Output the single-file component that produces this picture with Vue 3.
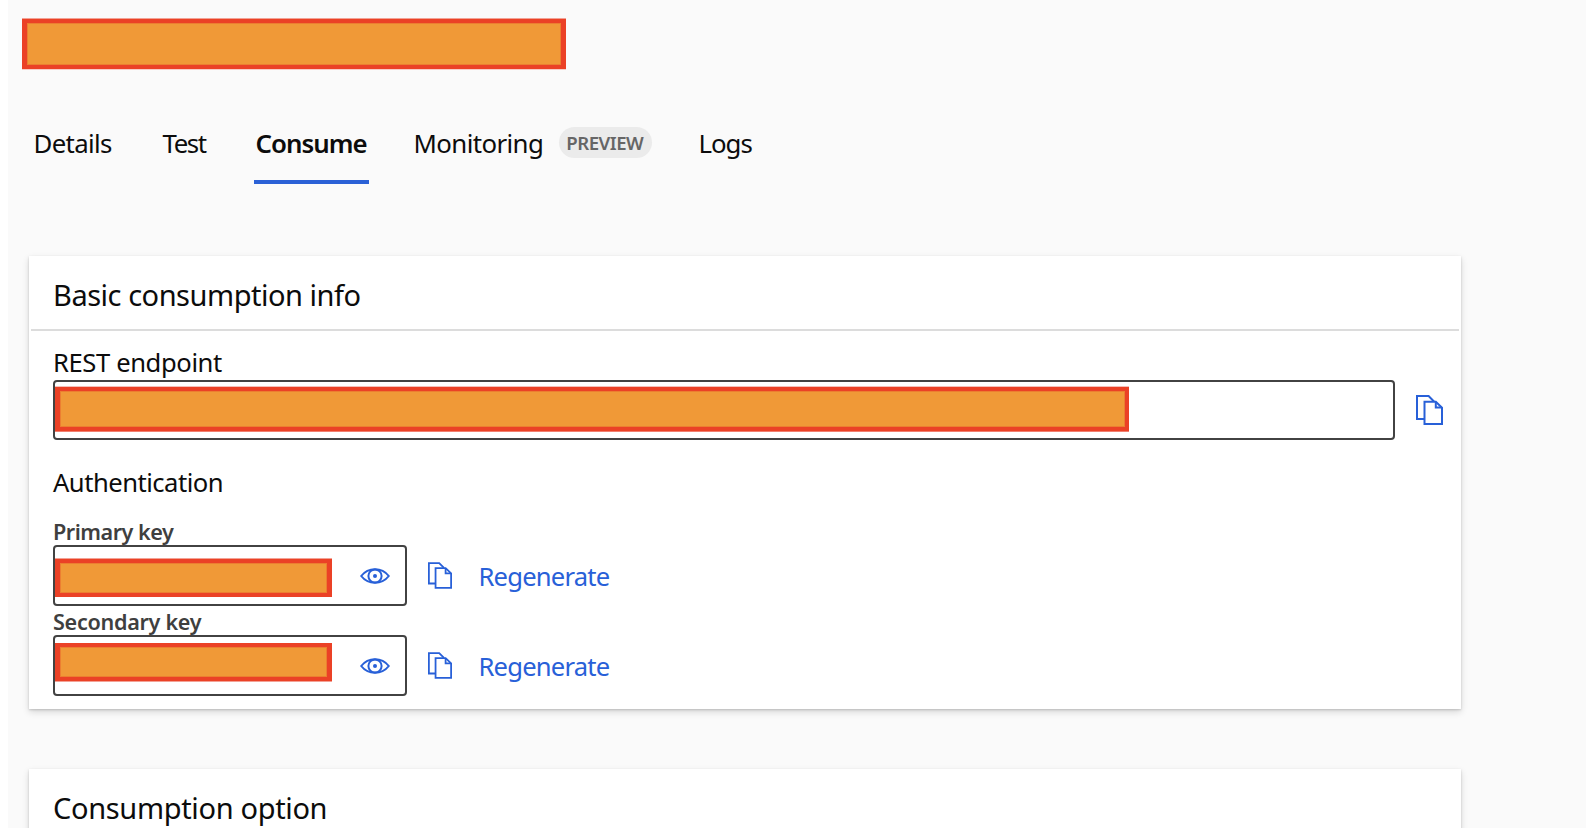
<script setup>
const keys = [
  { label: 'Primary key', cls: 'primary' },
  { label: 'Secondary key', cls: 'secondary' },
]
</script>

<template>
  <div class="window">
    <main class="page">
      <div class="mask mask-title"></div>

      <nav class="tabs">
        <a class="tab details">Details</a>
        <a class="tab test">Test</a>
        <a class="tab active">Consume</a>
        <a class="tab monitoring">Monitoring <span class="pill">PREVIEW</span></a>
        <a class="tab logs">Logs</a>
      </nav>

      <section class="card">
        <h2 class="card-title basic">Basic consumption info</h2>
        <div class="card-body">
          <label class="heading rest">REST endpoint</label>
          <div class="row">
            <div class="field endpoint"><div class="mask mask-endpoint"></div></div>
            <svg class="copy large" viewBox="0 0 27 30">
              <path d="M8 24H1V1H12.6L18 6.500" />
              <path d="M8.500 6.800H19.800L26 12.700V29H8.500Z" />
              <path d="M19.800 6.800V12.500H26" />
            </svg>
          </div>

          <h3 class="heading auth">Authentication</h3>
          <div v-for="k in keys" :key="k.label" class="key" :class="k.cls">
            <label class="key-label">{{ k.label }}</label>
            <div class="row">
              <div class="field secret">
                <div class="mask mask-key"></div>
                <svg class="eye" viewBox="0 0 30 16">
                  <path d="M1.200 8C4.800 3.400 9.600 1.200 15 1.200S25.200 3.400 28.800 8C25.200 12.600 20.400 14.800 15 14.800S4.800 12.600 1.200 8Z" />
                  <circle cx="15" cy="8" r="6.600" />
                  <circle class="pupil" cx="15" cy="8" r="2" />
                </svg>
              </div>
              <svg class="copy small" viewBox="0 0 27 30">
                <path d="M8 24H1V1H12.6L18 6.500" />
                <path d="M8.500 6.800H19.800L26 12.700V29H8.500Z" />
                <path d="M19.800 6.800V12.500H26" />
              </svg>
              <a class="regenerate">Regenerate</a>
            </div>
          </div>
        </div>
      </section>

      <section class="card next">
        <h2 class="card-title option">Consumption option</h2>
      </section>
    </main>
  </div>
</template>

<style>
body { margin: 0; background: #fff; overflow: hidden; }
</style>

<style scoped>
.window {
  box-sizing: border-box;
  width: 1592px;
  height: 828px;
  padding: 0 6px 0 8px;
  overflow: hidden;
  background: #fff;
  font-family: "Noto Sans", "Open Sans", sans-serif;
  color: #0c0c0c;
}
.window * { box-sizing: border-box; }
.page {
  display: flow-root;
  height: 828px;
  overflow: hidden;
  background: #fafafa;
}
.mask {
  background: #f09937;
  border: 4px solid #eb4126;
  border-left-width: 5px;
}
.mask-title {
  width: 544px;
  height: 50px;
  margin: 19px 0 0 14px;
  border-right-width: 5px;
  box-shadow: 0 -1px #f3a195, 0 1px #f8cdc7, inset 0 0 0 1px #ec7e31;
}

.tabs {
  display: grid;
  grid-template-columns: 129px 91.5px 159px 285.5px auto;
  height: 61px;
  margin: 54px 0 0 25.5px;
}
.tab {
  display: flex;
  height: 61px;
  font-size: 25.8px;
  line-height: 40px;
  white-space: nowrap;
}
.details { letter-spacing: -0.68px; }
.test { letter-spacing: -1.4px; }
.monitoring { padding-left: 0.5px; letter-spacing: -0.6px; }
.logs { letter-spacing: -1px; }
.active {
  width: 115px;
  padding-left: 1.5px;
  border-bottom: 4px solid #2b61d6;
  font-weight: 600;
  letter-spacing: -0.95px;
}
.pill {
  width: 93px;
  height: 31px;
  margin: 4px 0 0 16px;
  padding-left: 7.2px;
  border-radius: 15.5px;
  background: #ebebeb;
  color: #666;
  font-size: 18.6px;
  font-weight: 600;
  line-height: 31px;
  letter-spacing: -0.5px;
}

.card {
  width: 1432px;
  height: 453px;
  margin: 72px 0 0 21px;
  background: #fff;
  box-shadow: 0 3px 7px rgba(0, 0, 0, 0.14), 0 1px 2px rgba(0, 0, 0, 0.16);
}
.card.next { height: 120px; margin-top: 60px; }
.card-title {
  height: 75px;
  margin: 0 2px;
  padding: 4px 0 0 22px;
  border-bottom: 2px solid #dcdcdc;
  font-size: 29px;
  font-weight: 400;
  line-height: 69px;
}
.basic { letter-spacing: -0.47px; }
.option { letter-spacing: -0.34px; }
.card-body { padding: 13px 0 0 24px; }
.heading {
  display: block;
  margin: 0;
  font-size: 25.6px;
  font-weight: 400;
  line-height: 38px;
  height: 36px;
}
.rest { letter-spacing: -0.39px; }
.auth { margin-top: 24px; letter-spacing: -0.5px; }
.row { display: flex; align-items: center; }
.field {
  display: flex;
  border: 2px solid #424242;
  border-radius: 4px;
}
.endpoint { width: 1342px; height: 60px; }
.mask-endpoint {
  width: 1074px;
  height: 44px;
  margin-top: 5px;
  box-shadow: 0 -1px #f6c0b8, 0 1px #f08070, inset 0 0 0 1px #ec7e31;
}
.copy, .eye { fill: none; stroke: #2860d8; stroke-width: 2; flex: none; }
.copy.large { width: 27px; height: 30px; margin-left: 21px; }
.copy.small { width: 24px; height: 27px; margin-left: 20.5px; }

.primary { padding-top: 18px; }
.secondary { padding-top: 2px; }
.key-label {
  display: block;
  height: 27px;
  color: #3f3f3f;
  font-size: 21.6px;
  font-weight: 600;
  line-height: 27px;
}
.primary .key-label { letter-spacing: -0.48px; }
.secondary .key-label { letter-spacing: -0.3px; }
.secret { width: 354px; height: 61px; }
.mask-key {
  width: 277px;
  height: 38px;
  border-right-width: 5px;
}
.primary .mask-key { margin-top: 12px; box-shadow: 0 -1px #f3a195, inset 0 0 0 1px #ec7e31; }
.secondary .mask-key { margin-top: 6px; box-shadow: 0 1px #f3a195, inset 0 0 0 1px #ec7e31; }
.eye { align-self: center; width: 30px; height: 16px; margin-left: 28px; }
.pupil { fill: #2860d8; stroke: none; }
.regenerate {
  margin-left: 27px;
  padding-top: 2px;
  color: #2860d8;
  font-size: 25.6px;
  line-height: 36px;
  letter-spacing: -0.8px;
}
</style>
